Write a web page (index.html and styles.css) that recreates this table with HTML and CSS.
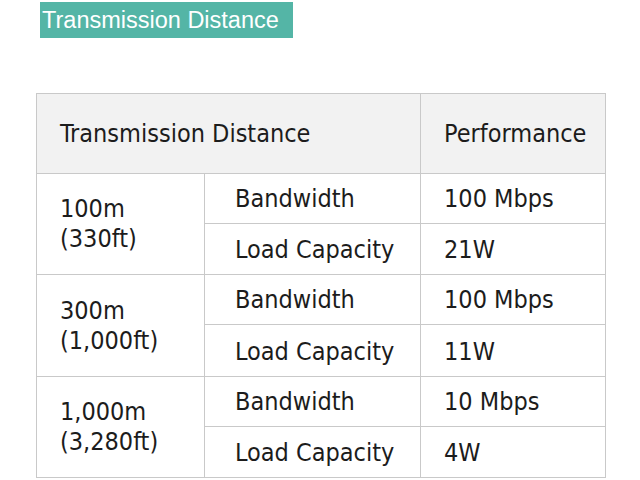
FILE: index.html
```html
<!DOCTYPE html>
<html>
<head>
<meta charset="utf-8">
<link rel="stylesheet" href="styles.css">
</head>
<body>
<div class="banner">Transmission Distance</div>
<table class="spec">
  <colgroup>
    <col class="c1"><col class="c2"><col class="c3">
  </colgroup>
  <tr class="head">
    <th colspan="2" class="p1">Transmission Distance</th>
    <th class="p3">Performance</th>
  </tr>
  <tr>
    <td rowspan="2" class="p1 dist">100m<br>(330ft)</td>
    <td class="p2">Bandwidth</td>
    <td class="p3">100 Mbps</td>
  </tr>
  <tr class="tight">
    <td class="p2 low">Load Capacity</td>
    <td class="p3 low">21W</td>
  </tr>
  <tr>
    <td rowspan="2" class="p1 dist">300m<br>(1,000ft)</td>
    <td class="p2">Bandwidth</td>
    <td class="p3">100 Mbps</td>
  </tr>
  <tr>
    <td class="p2 low">Load Capacity</td>
    <td class="p3 low">11W</td>
  </tr>
  <tr>
    <td rowspan="2" class="p1 dist">1,000m<br>(3,280ft)</td>
    <td class="p2">Bandwidth</td>
    <td class="p3">10 Mbps</td>
  </tr>
  <tr class="tight">
    <td class="p2 low">Load Capacity</td>
    <td class="p3 low">4W</td>
  </tr>
</table>
</body>
</html>
```

FILE: styles.css
```css
html, body {
  margin: 0;
  padding: 0;
  background: #ffffff;
}

.banner {
  margin: 2px 0 0 40px;
  width: 251px;
  height: 36px;
  padding-left: 2px;
  background: #54b5a6;
  color: #ffffff;
  font-family: "Liberation Sans", Arial, sans-serif;
  font-size: 23.5px;
  line-height: 36px;
  white-space: nowrap;
}

.spec {
  margin: 55px 0 0 36px;
  border-collapse: collapse;
  table-layout: fixed;
  width: 569px;
  font-family: "DejaVu Sans Condensed", "DejaVu Sans", sans-serif;
  font-stretch: semi-condensed;
  font-size: 25px;
  line-height: 30px;
  color: #1c1c1c;
}

.c1 { width: 168px; }
.c2 { width: 216px; }
.c3 { width: 185px; }

.spec th,
.spec td {
  border: 1px solid #c9c9c9;
  font-weight: normal;
  text-align: left;
  vertical-align: middle;
  padding: 0;
  height: 49px;
  white-space: nowrap;
}

.spec .tight td {
  height: 48px;
}

.spec .head th {
  height: 79px;
  background: #f2f2f2;
}

.p1 { padding-left: 23px !important; }
.p2 { padding-left: 30px !important; }
.p3 { padding-left: 23px !important; }

.low { padding-top: 2px !important; }
```
